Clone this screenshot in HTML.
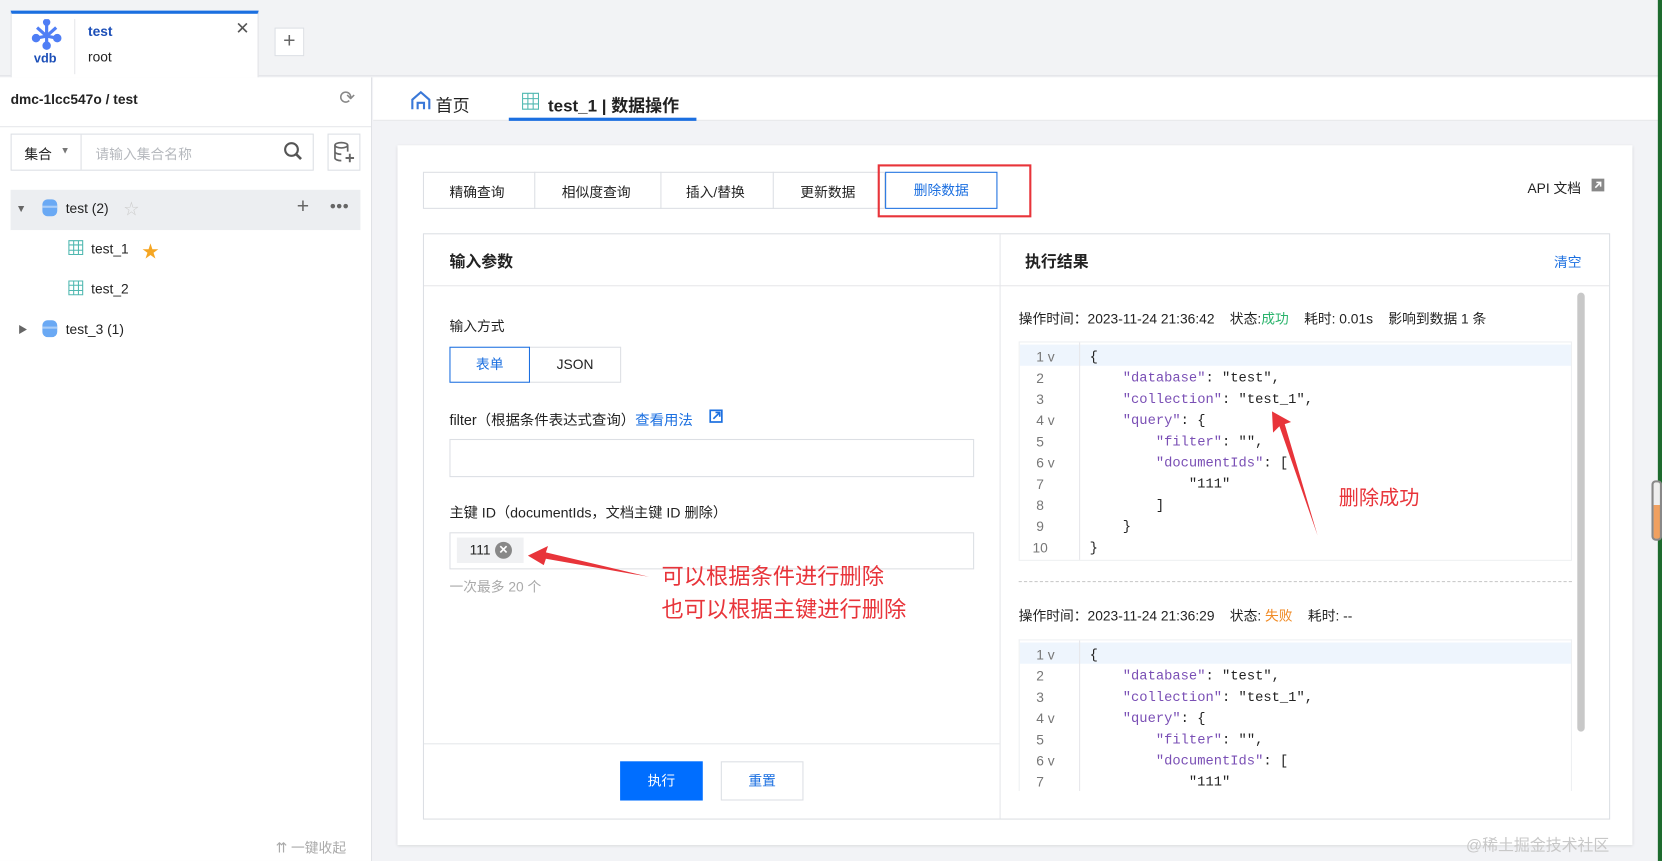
<!DOCTYPE html>
<html><head><meta charset="utf-8">
<style>
*{box-sizing:border-box;margin:0;padding:0}
html,body{width:1662px;height:861px;overflow:hidden;background:#f3f4f7}
body{font-family:"Liberation Sans","Noto Sans CJK SC",sans-serif;color:#222;font-size:13px}
#w{position:absolute;left:0;top:0;width:1568px;height:812px;transform:scale(1.06,1.0603);transform-origin:0 0;background:#f2f3f6}
.a{position:absolute;white-space:nowrap}
.mono{font-family:"Liberation Mono","DejaVu Sans Mono",monospace;font-size:13px}
.b{border:1px solid #dcdfe4}
.red{color:#e8343a;font-size:21px}
</style></head><body><div id="w">
<div class="a" style="left:0;top:0;width:1568px;height:72px;background:#f2f3f5;border-bottom:1px solid #e0e2e6"></div>
<div class="a" style="left:10px;top:10px;width:234px;height:63px;background:#fff;border-top:3px solid #1b6fe0;border-left:1px solid #e0e2e6;border-right:1px solid #e0e2e6"></div>
<svg class="a" style="left:28px;top:18px" width="32" height="30" viewBox="0 0 32 30"><g stroke="#4f7ef5" stroke-width="3" fill="#4f7ef5"><line x1="16" y1="3" x2="16" y2="24"/><line x1="7" y1="8" x2="16" y2="16"/><line x1="25" y1="8" x2="16" y2="16"/><line x1="6" y1="18" x2="16" y2="16"/><line x1="26" y1="18" x2="16" y2="16"/><circle cx="16" cy="3" r="2"/><circle cx="16" cy="25" r="2.5"/><circle cx="6" cy="18" r="2.5"/><circle cx="26" cy="18" r="2.5"/></g></svg>
<div class="a" style="left:32px;top:48px;color:#1c4fb8;font-weight:bold;font-size:12px">vdb</div>
<div class="a" style="left:70px;top:18px;width:1px;height:52px;background:#e6e7ea"></div>
<div class="a" style="left:83px;top:22px;color:#1c4fb8;font-weight:bold;font-size:13px">test</div>
<div class="a" style="left:83px;top:46px;font-size:13px">root</div>
<div class="a" style="left:222px;top:17px;font-size:16px;color:#555">✕</div>
<div class="a b" style="left:259px;top:26px;width:28px;height:27px;background:#fff;text-align:center;line-height:24px;font-size:20px;color:#666">+</div>
<div class="a" style="left:0;top:73px;width:351px;height:739px;background:#fff;border-right:1px solid #e0e2e6"></div>
<div class="a" style="left:0;top:119px;width:350px;height:1px;background:#e6e7ea"></div>
<div class="a" style="left:10px;top:86px;font-weight:bold;font-size:13px">dmc-1lcc547o / test</div>
<div class="a" style="left:320px;top:82px;font-size:18px;color:#888">⟳</div>
<div class="a b" style="left:10px;top:126px;width:286px;height:35px;background:#fff"></div>
<div class="a" style="left:76px;top:127px;width:1px;height:33px;background:#dcdfe4"></div>
<div class="a" style="left:23px;top:135px">集合</div>
<div class="a" style="left:57px;top:137px;font-size:9px;color:#777">▼</div>
<div class="a" style="left:90px;top:135px;color:#b5b8bd">请输入集合名称</div>
<svg class="a" style="left:267px;top:133px" width="20" height="20"><circle cx="8" cy="8" r="6" stroke="#555" stroke-width="2" fill="none"/><line x1="12.5" y1="12.5" x2="17" y2="17" stroke="#555" stroke-width="2.5"/></svg>
<div class="a b" style="left:309px;top:126px;width:31px;height:35px;background:#fff"></div>
<svg class="a" style="left:314px;top:133px" width="22" height="22"><ellipse cx="8" cy="4" rx="6" ry="2.5" stroke="#666" stroke-width="1.6" fill="none"/><path d="M2 4v12c0 1.5 3 2.5 6 2.5M14 4v6M2 10c0 1.5 3 2.5 6 2.5" stroke="#666" stroke-width="1.6" fill="none"/><path d="M16 12v8M12 16h8" stroke="#666" stroke-width="1.8"/></svg>
<div class="a" style="left:10px;top:179px;width:330px;height:38px;background:#eceef1"></div>
<div class="a" style="left:15px;top:192px;font-size:10px;color:#666">▼</div>
<svg class="a" style="left:39px;top:187px" width="16" height="18"><rect x="1" y="1" width="14" height="16" rx="5" fill="#6aa9f4"/><rect x="1" y="7" width="14" height="2" fill="#a9cdf8"/></svg>
<div class="a" style="left:62px;top:189px">test (2)</div>
<div class="a" style="left:117px;top:187px;color:#ccc;font-size:14px">☆</div>
<div class="a" style="left:280px;top:184px;font-size:20px;color:#666">+</div>
<div class="a" style="left:311px;top:189px;font-size:10px;color:#666;letter-spacing:0px">●●●</div>
<svg class="a" style="left:64px;top:226px" width="15" height="15"><path d="M1 1h13v13H1zM1 5h13M1 10h13M5.5 1v13M10 1v13" stroke="#4fb8b0" fill="none"/></svg>
<div class="a" style="left:86px;top:227px">test_1</div>
<div class="a" style="left:134px;top:224px;color:#f5a623;font-size:16px">★</div>
<svg class="a" style="left:64px;top:264px" width="15" height="15"><path d="M1 1h13v13H1zM1 5h13M1 10h13M5.5 1v13M10 1v13" stroke="#4fb8b0" fill="none"/></svg>
<div class="a" style="left:86px;top:265px">test_2</div>
<div class="a" style="left:17px;top:304px;font-size:9px;color:#666">▶</div>
<svg class="a" style="left:39px;top:301px" width="16" height="18"><rect x="1" y="1" width="14" height="16" rx="5" fill="#6aa9f4"/><rect x="1" y="7" width="14" height="2" fill="#a9cdf8"/></svg>
<div class="a" style="left:62px;top:303px">test_3 (1)</div>
<div class="a" style="left:260px;top:789px;color:#aaa">⇈ 一键收起</div>
<div class="a" style="left:352px;top:73px;width:1216px;height:41px;background:#fff;border-bottom:1px solid #e6e7ea"></div>
<svg class="a" style="left:387px;top:85px" width="20" height="20"><path d="M2 18V9L10 2l8 7v9M7 18v-6h6v6" stroke="#3a78d8" stroke-width="2" fill="none"/></svg>
<div class="a" style="left:411px;top:86px;font-size:16px">首页</div>
<svg class="a" style="left:492px;top:87px" width="17" height="17"><path d="M1 1h15v15H1zM1 6h15M1 11h15M6 1v15M11 1v15" stroke="#4fb8b0" fill="none"/></svg>
<div class="a" style="left:517px;top:86px;font-size:16px;font-weight:bold">test_1 | 数据操作</div>
<div class="a" style="left:480px;top:111px;width:177px;height:3px;background:#1b6fe0"></div>
<div class="a" style="left:375px;top:137px;width:1165px;height:660px;background:#fff;box-shadow:0 1px 3px rgba(0,0,0,.12)"></div>
<div class="a b" style="left:399px;top:162px;width:436px;height:35px;background:#fff"></div>
<div class="a" style="left:504px;top:162px;width:1px;height:35px;background:#dcdfe4"></div>
<div class="a" style="left:623px;top:162px;width:1px;height:35px;background:#dcdfe4"></div>
<div class="a" style="left:729px;top:162px;width:1px;height:35px;background:#dcdfe4"></div>
<div class="a" style="left:424px;top:171px">精确查询</div>
<div class="a" style="left:530px;top:171px">相似度查询</div>
<div class="a" style="left:647px;top:171px">插入/替换</div>
<div class="a" style="left:755px;top:171px">更新数据</div>
<div class="a" style="left:835px;top:162px;width:106px;height:35px;border:1px solid #1b6fe0;background:#fff;color:#1b6fe0;text-align:center;line-height:33px">删除数据</div>
<div class="a" style="left:828px;top:155px;width:145px;height:50px;border:2px solid #e8343a"></div>
<div class="a" style="left:1441px;top:167px">API 文档</div>
<svg class="a" style="left:1501px;top:168px" width="13" height="13"><rect x="0.5" y="0.5" width="12" height="12" fill="#888"/><path d="M4 9l5-5M5 4h4v4" stroke="#fff" stroke-width="1.5" fill="none"/></svg>
<div class="a b" style="left:399px;top:220px;width:1120px;height:553px"></div>
<div class="a" style="left:943px;top:221px;width:1px;height:551px;background:#e6e7ea"></div>
<div class="a" style="left:400px;top:269px;width:1118px;height:1px;background:#e6e7ea"></div>
<div class="a" style="left:424px;top:236px;font-size:15px;font-weight:bold">输入参数</div>
<div class="a" style="left:967px;top:236px;font-size:15px;font-weight:bold">执行结果</div>
<div class="a" style="left:1466px;top:237px;color:#1b6fe0">清空</div>
<div class="a" style="left:424px;top:297px">输入方式</div>
<div class="a b" style="left:499px;top:327px;width:87px;height:34px;text-align:center;line-height:32px">JSON</div>
<div class="a" style="left:424px;top:327px;width:76px;height:34px;border:1px solid #1b6fe0;text-align:center;line-height:32px;color:#1b6fe0;background:#fff">表单</div>
<div class="a" style="left:424px;top:385px;font-size:13.6px">filter（根据条件表达式查询）<span style="color:#1b6fe0">查看用法</span></div>
<svg class="a" style="left:669px;top:386px" width="13" height="13"><rect x="1" y="1" width="11" height="11" fill="none" stroke="#1b6fe0" stroke-width="1.6"/><path d="M4 9l6-6M6 3h4v4" stroke="#1b6fe0" stroke-width="1.6" fill="none"/></svg>
<div class="a b" style="left:424px;top:414px;width:495px;height:36px"></div>
<div class="a" style="left:424px;top:472px;font-size:13.4px">主键 ID（documentIds，文档主键 ID 删除）</div>
<div class="a b" style="left:424px;top:502px;width:495px;height:35px"></div>
<div class="a" style="left:431px;top:507px;width:63px;height:24px;background:#f0f1f3"></div>
<div class="a" style="left:443px;top:511px">111</div>
<div class="a" style="left:467px;top:511px;width:16px;height:16px;border-radius:50%;background:#888;color:#fff;font-size:11px;text-align:center;line-height:16px;font-weight:bold">✕</div>
<div class="a" style="left:424px;top:543px;color:#aaa">一次最多 20 个</div>
<div class="a red" style="left:624px;top:528px">可以根据条件进行删除</div>
<div class="a red" style="left:624px;top:559px">也可以根据主键进行删除</div>
<svg class="a" style="left:0;top:0" width="1568" height="812"><path d="M612 544L515 521L517 515L498 524L513 533L515 527Z" fill="#e8343a"/><path d="M1243 505L1212 400L1218 398L1200 388L1201 408L1207 402Z" fill="#e8343a"/></svg>
<div class="a" style="left:400px;top:701px;width:543px;height:1px;background:#e6e7ea"></div>
<div class="a" style="left:585px;top:718px;width:78px;height:37px;background:#006eff;color:#fff;text-align:center;line-height:37px">执行</div>
<div class="a b" style="left:680px;top:718px;width:78px;height:37px;color:#1b6fe0;text-align:center;line-height:35px">重置</div>
<div class="a" style="left:961px;top:290px">操作时间：2023-11-24 21:36:42 &nbsp;&nbsp; 状态:<span style="color:#29b36b">成功</span> &nbsp;&nbsp; 耗时: 0.01s &nbsp;&nbsp; 影响到数据 1 条</div>
<div class="a" style="left:961px;top:322px;width:522px;height:207px;border:1px solid #eef0f2;overflow:hidden">
<div style="position:absolute;left:0;top:2px;width:522px;height:20px;background:#eef5fd"></div>
<div style="position:absolute;left:56px;top:0;width:1px;height:207px;background:#e6e7ea"></div>
<pre style="position:absolute;left:12px;top:4px;line-height:20px;color:#777;font-family:'Liberation Sans',sans-serif;font-size:13px"> 1 v
 2
 3
 4 v
 5
 6 v
 7
 8
 9
10</pre>
<pre class="mono" style="position:absolute;left:66px;top:4px;line-height:20px;color:#222">{
    <span style="color:#7a4fb5">"database"</span>: "test",
    <span style="color:#7a4fb5">"collection"</span>: "test_1",
    <span style="color:#7a4fb5">"query"</span>: {
        <span style="color:#7a4fb5">"filter"</span>: "",
        <span style="color:#7a4fb5">"documentIds"</span>: [
            "111"
        ]
    }
}</pre></div>
<div class="a red" style="left:1263px;top:455px;font-size:19px">删除成功</div>
<div class="a" style="left:961px;top:548px;width:522px;border-top:1px dashed #ccc"></div>
<div class="a" style="left:961px;top:570px">操作时间：2023-11-24 21:36:29 &nbsp;&nbsp; 状态: <span style="color:#f08a24">失败</span> &nbsp;&nbsp; 耗时: --</div>
<div class="a" style="left:961px;top:603px;width:522px;height:143px;border:1px solid #eef0f2;border-bottom:none;overflow:hidden">
<div style="position:absolute;left:0;top:2px;width:522px;height:20px;background:#eef5fd"></div>
<div style="position:absolute;left:56px;top:0;width:1px;height:143px;background:#e6e7ea"></div>
<pre style="position:absolute;left:12px;top:4px;line-height:20px;color:#777;font-size:13px;font-family:'Liberation Sans',sans-serif"> 1 v
 2
 3
 4 v
 5
 6 v
 7
 8</pre>
<pre class="mono" style="position:absolute;left:66px;top:4px;line-height:20px;color:#222">{
    <span style="color:#7a4fb5">"database"</span>: "test",
    <span style="color:#7a4fb5">"collection"</span>: "test_1",
    <span style="color:#7a4fb5">"query"</span>: {
        <span style="color:#7a4fb5">"filter"</span>: "",
        <span style="color:#7a4fb5">"documentIds"</span>: [
            "111"
        ]</pre></div>
<div class="a" style="left:1488px;top:276px;width:7px;height:414px;border-radius:4px;background:#c8c8c8"></div>
<div class="a" style="left:1564px;top:0;width:4px;height:812px;background:#1e6b2e"></div>
<div class="a" style="left:1558px;top:453px;width:10px;height:57px;border:2px solid #888;border-radius:4px;background:linear-gradient(#eee 40%,#f0a060 40%)"></div>
<div class="a" style="left:1383px;top:786px;color:#c8c8c8;font-size:15px">@稀土掘金技术社区</div>
</div></body></html>
